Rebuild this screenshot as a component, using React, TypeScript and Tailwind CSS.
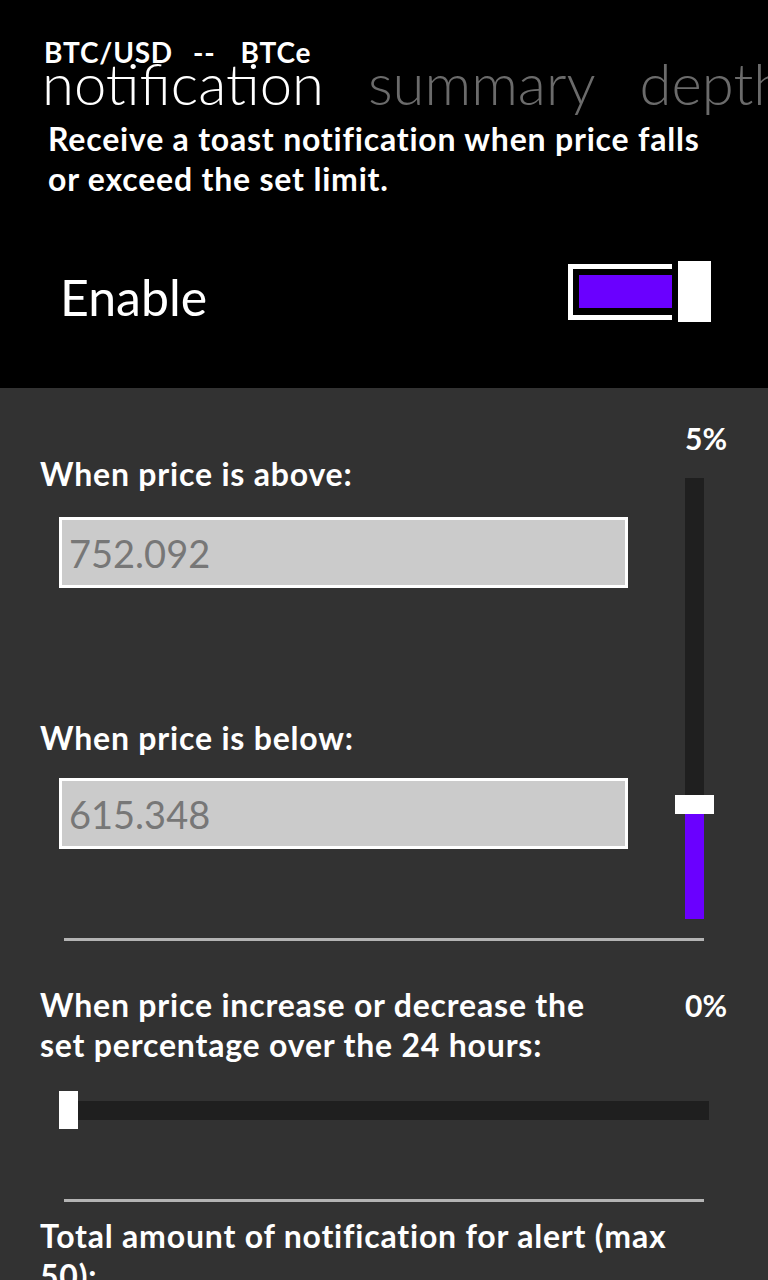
import React from 'react'

const font = "font-['Lato','Noto_Sans',sans-serif]"

function TextBox({ value }: { value: string }) {
  return (
    <div className="w-[569px] h-[71px] border-[3px] border-white bg-[#cbcbcb] flex items-center pl-[7px]">
      <span className="text-[38px] leading-none text-[#777777]">{value}</span>
    </div>
  )
}

function Toggle() {
  return (
    <div className="flex items-center">
      <div className="w-[104px] h-[56px] border-[5px] border-r-0 border-white flex items-center pl-[6px]">
        <div className="w-full h-[33px] bg-[#6a00ff]" />
      </div>
      <div className="w-[33px] h-[61px] bg-white ml-[6px]" />
    </div>
  )
}

export default function App() {
  return (
    <div className={`w-[768px] h-[1280px] overflow-hidden bg-[#323232] text-white ${font}`}>
      {/* header / pivot */}
      <div className="bg-black h-[388px] overflow-hidden">
        <div className="flex pl-[44px] pt-[38px] text-[28px] font-bold leading-[28px] tracking-[0.8px]">
          <span>BTC/USD</span>
          <span className="ml-[20px]">--</span>
          <span className="ml-[25px]">BTCe</span>
        </div>
        <div className="flex gap-[44px] pl-[42px] -mt-[12px] text-[58px] font-light leading-[58px] whitespace-nowrap">
          <span className="text-white">notification</span>
          <span className="text-[#6b6b6b]">summary</span>
          <span className="text-[#6b6b6b]">depth</span>
        </div>
        <p className="pl-[48px] mt-[7px] text-[32px] font-bold leading-[40px] tracking-[0.8px]">
          Receive a toast notification when price falls
          <br />
          or exceed the set limit.
        </p>
        <div className="flex items-start justify-between pl-[60px] pr-[57px] mt-[62px]">
          <span className="mt-[11px] text-[50px] leading-[50px]">Enable</span>
          <Toggle />
        </div>
      </div>

      {/* settings */}
      <div className="flex">
        <div className="w-[640px] pl-[40px] pt-[68px]">
          <div className="text-[32px] font-bold leading-[36px] tracking-[0.8px]">When price is above:</div>
          <div className="ml-[19px] mt-[25px]">
            <TextBox value="752.092" />
          </div>
          <div className="text-[32px] font-bold leading-[36px] tracking-[0.8px] mt-[132px]">When price is below:</div>
          <div className="ml-[19px] mt-[22px]">
            <TextBox value="615.348" />
          </div>
        </div>
        <div className="w-[128px] pt-[35px]">
          <div className="text-right pr-[41px] text-[30px] font-bold leading-[30px]">5%</div>
          <div className="ml-[35px] w-[39px] mt-[25px] flex flex-col items-center">
            <div className="w-[19px] h-[317px] bg-[#1f1f1f]" />
            <div className="w-[39px] h-[19px] bg-white" />
            <div className="w-[19px] h-[105px] bg-[#6a00ff]" />
          </div>
        </div>
      </div>

      <div className="ml-[64px] w-[640px] h-[3px] bg-[#b4b4b4] mt-[19px]" />

      <div className="flex justify-between pl-[40px] pr-[41px] mt-[44px]">
        <div className="text-[32px] font-bold leading-[40px] tracking-[0.8px]">
          When price increase or decrease the
          <br />
          set percentage over the 24 hours:
        </div>
        <div className="text-[30px] font-bold leading-[40px]">0%</div>
      </div>

      <div className="flex items-center ml-[59px] mt-[26px]">
        <div className="w-[19px] h-[38px] bg-white" />
        <div className="w-[631px] h-[19px] bg-[#1f1f1f]" />
      </div>

      <div className="ml-[64px] w-[640px] h-[3px] bg-[#b4b4b4] mt-[70px]" />

      <div className="pl-[40px] mt-[14px] text-[32px] font-bold leading-[40px] tracking-[0.8px]">
        Total amount of notification for alert (max
        <br />
        50):
      </div>
    </div>
  )
}
